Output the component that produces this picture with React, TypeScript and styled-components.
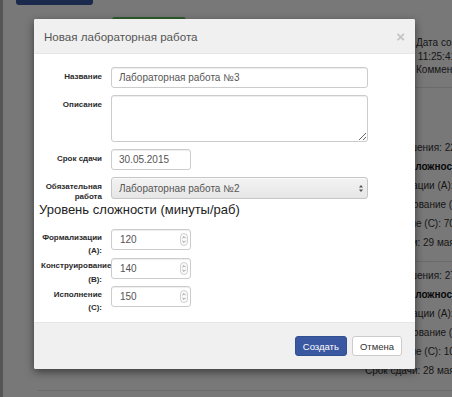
import React from "react";
import styled, { createGlobalStyle } from "styled-components";

const GlobalStyle = createGlobalStyle`
  html, body {
    margin: 0;
    padding: 0;
    width: 452px;
    height: 397px;
    overflow: hidden;
    background: #fff;
  }
  body {
    font-family: "Liberation Sans", Arial, Helvetica, sans-serif;
  }
  * { box-sizing: border-box; }
`;

const Screen = styled.div`
  position: relative;
  width: 452px;
  height: 397px;
  overflow: hidden;
  font-family: "Liberation Sans", Arial, Helvetica, sans-serif;
`;

/* ---------- page behind the dialog ---------- */

const Site = styled.div`
  height: 100%;
  border-left: 3px solid #b4b4b4;
  background: #fff;
`;

const TopBar = styled.div`
  height: 5px;
  padding-left: 13px;
`;

const PrimaryStub = styled.div`
  width: 77px;
  height: 5px;
  background: #3a58a3;
  border-radius: 0 0 3px 3px;
`;

const Columns = styled.div`
  display: grid;
  grid-template-columns: 362px 1fr;
`;

const Main = styled.div`
  padding: 12px 0 0 109px;
`;

const SuccessTab = styled.div`
  width: 74px;
  height: 24px;
  background: #62c462;
  border-radius: 3px 3px 0 0;
`;

const Side = styled.div`
  font-size: 10px;
  color: #333;
  white-space: nowrap;
`;

const Meta = styled.div`
  padding: 31px 0 10px 0;
  line-height: 13.5px;
  border-bottom: 1px solid #e3e3e3;
`;

const MetaLine = styled.div<{ $indent?: number }>`
  padding-left: ${(p) => p.$indent ?? 0}px;
`;

const Entry = styled.div<{ $top: number; $last?: boolean }>`
  padding-top: ${(p) => p.$top}px;
  padding-bottom: 9.5px;
  line-height: 19px;
  border-bottom: ${(p) => (p.$last ? "0" : "1px solid #e3e3e3")};
`;

const EntryLine = styled.div<{ $bold?: boolean }>`
  font-weight: ${(p) => (p.$bold ? 700 : 400)};
  color: ${(p) => (p.$bold ? "#111" : "#333")};
`;

const PageRule = styled.div`
  margin-left: 35px;
  border-top: 1px solid #e3e3e3;
`;

const Backdrop = styled.div`
  position: absolute;
  inset: 0;
  background: rgba(0, 0, 0, 0.53);
`;

/* ---------- dialog ---------- */

const Dialog = styled.div`
  position: absolute;
  left: 34px;
  top: 19px;
  width: 381px;
  background: #fff;
  border-radius: 2px;
  box-shadow: 0 3px 9px rgba(0, 0, 0, 0.5);
  overflow: hidden;
`;

const DialogHeader = styled.div`
  height: 35px;
  display: flex;
  align-items: center;
  justify-content: space-between;
  padding: 0 10px;
  background: #f0f0f0;
  border-bottom: 1px solid #e6e6e6;
`;

const DialogTitle = styled.h4`
  margin: 0;
  font-size: 11.6px;
  font-weight: 400;
  color: #555;
`;

const CloseButton = styled.button`
  border: 0;
  background: none;
  padding: 0;
  font: 700 15px/1 "Liberation Sans", Arial, sans-serif;
  color: #c4c4c4;
  cursor: pointer;
`;

const DialogBody = styled.div`
  height: 268px;
  padding: 13px 0 0 5px;
`;

const DialogFooter = styled.div`
  height: 47px;
  display: flex;
  justify-content: flex-end;
  align-items: center;
  gap: 5px;
  padding-right: 13px;
  background: #f0f0f0;
  border-top: 1px solid #e6e6e6;
`;

const FieldGroup = styled.div`
  display: flex;
  flex-direction: column;
  gap: 7px;
`;

const FieldRow = styled.div`
  display: grid;
  grid-template-columns: 63px 1fr;
  column-gap: 9px;
  align-items: start;
`;

const FieldLabel = styled.label<{ $loose?: boolean }>`
  text-align: right;
  font-size: 8px;
  font-weight: 700;
  color: #2a2a2a;
  padding: ${(p) => (p.$loose ? "1.5px 0 0 2px" : "5px 0 0 2px")};
  line-height: ${(p) => (p.$loose ? "13.5px" : "10px")};
`;

const inputBase = `
  font-family: "Liberation Sans", Arial, sans-serif;
  font-size: 10px;
  color: #555;
  background: #fff;
  border: 1px solid #ccc;
  border-radius: 3px;
  box-shadow: inset 0 1px 1px rgba(0, 0, 0, 0.075);
  outline: none;
`;

const TextInput = styled.input<{ $w: number }>`
  ${inputBase}
  width: ${(p) => p.$w}px;
  height: 21px;
  padding: 0 7px;
`;

const TextArea = styled.textarea`
  ${inputBase}
  display: block;
  width: 257px;
  height: 47px;
  padding: 4px 7px;
  resize: vertical;
  margin: 0;
`;

const SelectWrap = styled.div`
  position: relative;
  width: 257px;
  height: 22px;
`;

const Select = styled.select`
  ${inputBase}
  appearance: none;
  -webkit-appearance: none;
  width: 100%;
  height: 100%;
  padding: 0 7px;
  border-color: #c6c6c6;
  background: linear-gradient(#f3f3f3, #e6e6e6);
  box-shadow: inset 0 1px 0 rgba(255, 255, 255, 0.6);
`;

const SelectArrow = styled.svg`
  position: absolute;
  right: 4px;
  top: 7px;
  pointer-events: none;
`;

const SectionTitle = styled.h4`
  margin: 0 0 11px;
  font-size: 13px;
  font-weight: 400;
  line-height: 16px;
  color: #222;
`;

const NumberGroup = styled.div`
  display: flex;
  flex-direction: column;
`;

const NumberBox = styled.div`
  ${inputBase}
  width: 80px;
  height: 21px;
  display: flex;
  align-items: center;
  padding: 0 2px 0 8px;
`;

const NumberValue = styled.input`
  flex: 1;
  min-width: 0;
  border: 0;
  outline: none;
  background: transparent;
  padding: 0;
  font-family: "Liberation Sans", Arial, sans-serif;
  font-size: 10px;
  color: #555;
`;

const Button = styled.button<{ $primary?: boolean }>`
  height: 20px;
  padding: 0 7px;
  font-family: "Liberation Sans", Arial, sans-serif;
  font-size: 9.5px;
  border-radius: 3px;
  border: 1px solid ${(p) => (p.$primary ? "#31508f" : "#ccc")};
  background: ${(p) => (p.$primary ? "#3a57a1" : "#fff")};
  color: ${(p) => (p.$primary ? "#fff" : "#333")};
  cursor: pointer;
`;

const Spinner = () => (
  <svg width="8" height="13" viewBox="0 0 8 13">
    <rect x="0.5" y="0.5" width="7" height="12" rx="3.5" fill="#fafafa" stroke="#c4c4c4" strokeWidth="0.8" />
    <path d="M2.4 5.2 L4 3.6 L5.6 5.2" fill="none" stroke="#777" strokeWidth="0.8" />
    <path d="M2.4 7.8 L4 9.4 L5.6 7.8" fill="none" stroke="#777" strokeWidth="0.8" />
  </svg>
);

const numberFields = [
  { id: "a", label: ["Формализации", "(A):"], value: "120" },
  { id: "b", label: ["Конструирование", "(B):"], value: "140" },
  { id: "c", label: ["Исполнение", "(C):"], value: "150" },
];

const entries = [
  { top: 50, time: "22", a: "15", b: "20", c: "70", due: "29 мая 2015" },
  { top: 4, time: "27", a: "10", b: "15", c: "10", due: "28 мая 2015" },
];

export default function App() {
  return (
    <Screen>
      <GlobalStyle />
      <Site>
        <TopBar>
          <PrimaryStub />
        </TopBar>
        <Columns>
          <Main>
            <SuccessTab />
          </Main>
          <Side>
            <Meta>
              <MetaLine $indent={51}>Дата создания:</MetaLine>
              <MetaLine>29.05.2015 11:25:41</MetaLine>
              <MetaLine $indent={51}>Комментарий:</MetaLine>
            </Meta>
            {entries.map((e, i) => (
              <Entry key={i} $top={e.top} $last={i === entries.length - 1}>
                <EntryLine>Время решения: {e.time} мин</EntryLine>
                <EntryLine $bold>Уровень сложности</EntryLine>
                <EntryLine>Формализации (A): {e.a}</EntryLine>
                <EntryLine>Конструирование (B): {e.b}</EntryLine>
                <EntryLine>Исполнение (C): {e.c}</EntryLine>
                <EntryLine>Срок сдачи: {e.due}</EntryLine>
              </Entry>
            ))}
          </Side>
        </Columns>
        <PageRule />
      </Site>

      <Backdrop />

      <Dialog role="dialog">
        <DialogHeader>
          <DialogTitle>Новая лабораторная работа</DialogTitle>
          <CloseButton aria-label="Закрыть">×</CloseButton>
        </DialogHeader>
        <DialogBody>
          <FieldGroup>
            <FieldRow>
              <FieldLabel>Название</FieldLabel>
              <TextInput $w={257} defaultValue="Лабораторная работа №3" />
            </FieldRow>
            <FieldRow>
              <FieldLabel>Описание</FieldLabel>
              <TextArea />
            </FieldRow>
            <FieldRow>
              <FieldLabel>Срок сдачи</FieldLabel>
              <TextInput $w={80} defaultValue="30.05.2015" />
            </FieldRow>
            <FieldRow>
              <FieldLabel>
                Обязательная
                <br />
                работа
              </FieldLabel>
              <SelectWrap>
                <Select defaultValue="2">
                  <option value="2">Лабораторная работа №2</option>
                </Select>
                <SelectArrow width="6" height="9" viewBox="0 0 6 9">
                  <path d="M1 3.6 L3 1 L5 3.6 Z" fill="#555" />
                  <path d="M1 5.4 L3 8 L5 5.4 Z" fill="#555" />
                </SelectArrow>
              </SelectWrap>
            </FieldRow>
          </FieldGroup>
          <SectionTitle>Уровень сложности (минуты/раб)</SectionTitle>
          <NumberGroup>
            {numberFields.map((f) => (
              <FieldRow key={f.id}>
                <FieldLabel $loose>
                  {f.label[0]}
                  <br />
                  {f.label[1]}
                </FieldLabel>
                <NumberBox>
                  <NumberValue defaultValue={f.value} />
                  <Spinner />
                </NumberBox>
              </FieldRow>
            ))}
          </NumberGroup>
        </DialogBody>
        <DialogFooter>
          <Button $primary>Создать</Button>
          <Button>Отмена</Button>
        </DialogFooter>
      </Dialog>
    </Screen>
  );
}
